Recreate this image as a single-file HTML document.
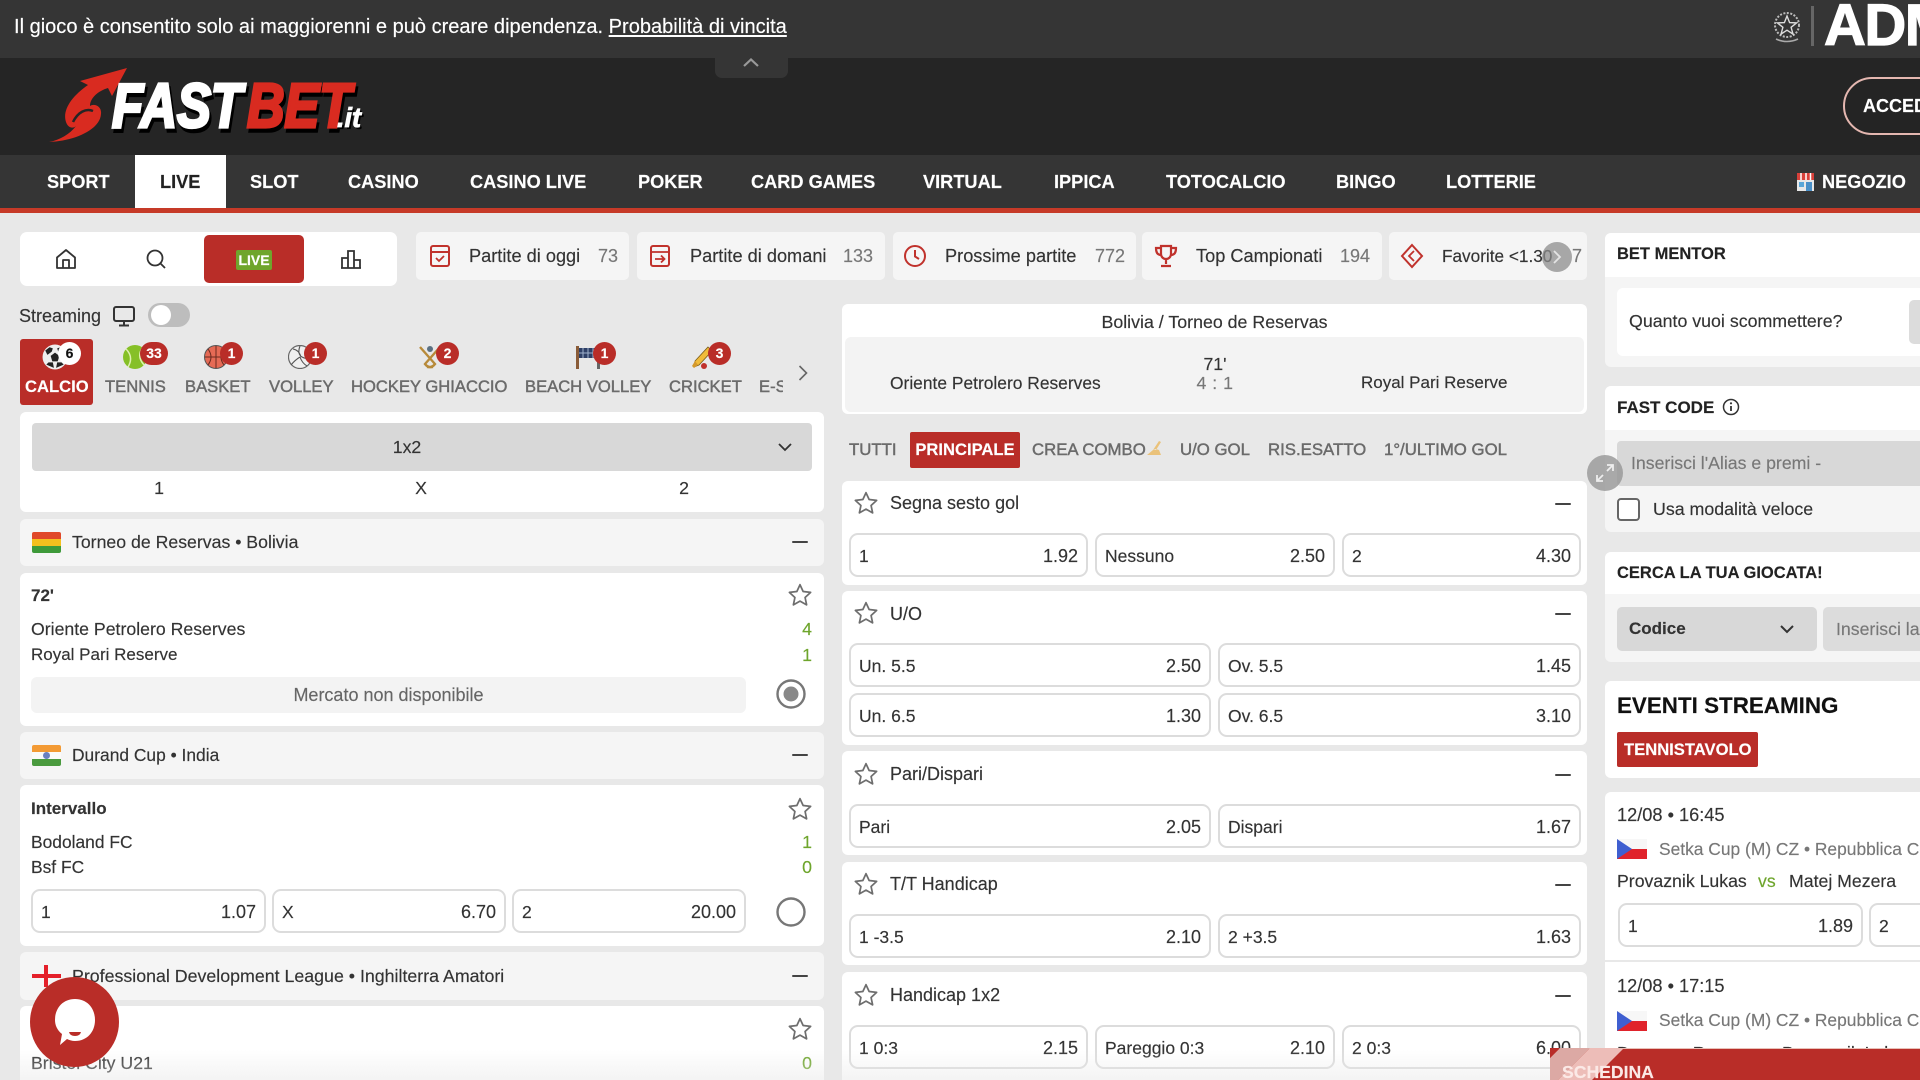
<!DOCTYPE html>
<html lang="it"><head><meta charset="utf-8"><title>Fastbet</title>
<style>
html,body{margin:0;padding:0;background:#e8e8e8}
#r{position:relative;width:1920px;height:1080px;overflow:hidden;background:#e8e8e8;font-family:"Liberation Sans",sans-serif;color:#333;font-size:17.7px;filter:blur(.35px);-webkit-text-stroke:.15px}
#r div,#r span,#r svg,#r a{position:absolute;box-sizing:border-box}
.t{white-space:nowrap;line-height:20px;height:20px;margin-top:1px}
.n{color:#fff;font-weight:bold;font-size:18.2px;top:171px}
.ch{top:232px;height:48px;background:#f5f5f5;border-radius:5px}
.ct{top:246px;font-size:18.2px}
.cn{top:246px;color:#777;font-size:18px}
.s{top:377px;color:#6b6b6b;font-size:16.6px;-webkit-text-stroke:.45px #6b6b6b}
.bd{background:#b92d28;color:#fff;font-weight:bold;font-size:14px;text-align:center;line-height:23px;height:23px;width:23px;border-radius:12px;top:342px}
.w{background:#fff;border-radius:6px}
.g{background:#f5f5f5;border-radius:6px}
.m{background:#444;height:2px;width:16px;border-radius:1px}
.sc{color:#6ea52c;right:1108px}
.b{display:block;background:#fff;border:2px solid #dcdcdc;border-radius:9px;height:44px}
.b span{top:11px;line-height:20px;white-space:nowrap;font-size:17.5px}
.b .l{left:8px}.b .v{right:8px;font-size:18px}
.tab{top:439px;color:#6b6b6b;font-size:16.8px;-webkit-text-stroke:.45px #6b6b6b}
.mt{font-size:18px}
.bo{font-weight:bold;font-size:17px}
</style></head><body><div id="r">
<svg width="0" height="0" style="left:0;top:0"><defs>
<symbol id="star" viewBox="0 0 24 24"><path d="M12 2.500l2.900 6.300 6.900.8-5.100 4.700 1.400 6.800-6.100-3.400-6.100 3.400 1.400-6.800-5.100-4.700 6.900-.8z" fill="none" stroke="#6e6e6e" stroke-width="1.600" stroke-linejoin="round"/></symbol>
<symbol id="cz" viewBox="0 0 30 20"><rect width="30" height="10" y="0" fill="#f7f7f7"/><rect width="30" height="10" y="10" fill="#e0232b"/><path d="M0 0L15 10 0 20z" fill="#3f5fd0"/></symbol>
</defs></svg>

<!-- top bar -->
<div style="left:0;top:0;width:1920px;height:58px;background:#353535"></div>
<div class="t" style="left:14px;top:16px;color:#fff;font-size:20.05px">Il gioco è consentito solo ai maggiorenni e può creare dipendenza. <span style="position:static;text-decoration:underline">Probabilità di vincita</span></div>
<svg style="left:1769px;top:8px" width="36" height="36" viewBox="0 0 36 36"><circle cx="18" cy="17" r="12" fill="none" stroke="#bbb" stroke-width="2" stroke-dasharray="2 1.500"/><path d="M18 8l2.600 6.600 7 .3-5.500 4.400 1.900 6.800-6-3.900-6 3.900 1.900-6.800-5.500-4.400 7-.3z" fill="none" stroke="#ddd" stroke-width="1.400"/><path d="M7 31q11 5 22 0" fill="none" stroke="#aaa" stroke-width="1.600"/></svg>
<div style="left:1811px;top:6px;width:3px;height:40px;background:#666"></div>
<div class="t" style="left:1824px;top:-2px;height:56px;line-height:56px;margin:0;color:#fff;font-weight:bold;font-size:58px;letter-spacing:-1.500px;-webkit-text-stroke:1.200px #fff">ADM</div>

<!-- logo bar -->
<div style="left:0;top:58px;width:1920px;height:97px;background:#252525"></div>
<div style="left:715px;top:58px;width:73px;height:20px;background:#353535;border-radius:0 0 7px 7px"></div>
<svg style="left:741px;top:55px" width="20" height="14" viewBox="0 0 20 14"><path d="M3 11l7-6.500 7 6.500" fill="none" stroke="#999" stroke-width="2.200"/></svg>
<svg style="left:40px;top:62px" width="340" height="90" viewBox="40 62 340 90">
<path d="M127 68L80 81 88 85C72 96 62 110 66 122 68 128 73 129 76 126 70 134 60 140 49 142 74 141 100 130 101 114 102 106 94 103 90 106 90 98 98 91 108 88L112 96z" fill="#d92b20"/>
<path d="M73 122C78 112 86 108 93 111" fill="none" stroke="#252525" stroke-width="2.500"/>
<g font-family="Liberation Sans,sans-serif" font-weight="bold" font-style="italic" font-size="62">
<text x="114" y="131" fill="#000" stroke="#000" stroke-width="3.500" textLength="130" lengthAdjust="spacingAndGlyphs">FAST</text>
<text x="112" y="127" fill="#fff" stroke="#fff" stroke-width="3.200" textLength="130" lengthAdjust="spacingAndGlyphs">FAST</text>
<text x="249" y="131" fill="#000" stroke="#000" stroke-width="3.500" textLength="104" lengthAdjust="spacingAndGlyphs">BET</text>
<text x="247" y="127" fill="#d92b20" stroke="#d92b20" stroke-width="3.200" textLength="104" lengthAdjust="spacingAndGlyphs">BET</text>
<text x="339" y="129" fill="#000" font-size="28" textLength="24" lengthAdjust="spacingAndGlyphs">.it</text>
<text x="337" y="127" fill="#fff" font-size="28" stroke="#fff" stroke-width=".8" textLength="24" lengthAdjust="spacingAndGlyphs">.it</text>
</g></svg>
<div style="left:1843px;top:77px;width:140px;height:58px;border:2px solid #e4b7b0;border-radius:29px;background:#242424"></div>
<div class="t" style="left:1863px;top:95px;color:#fff;font-weight:bold;font-size:18px">ACCEDI</div>

<!-- nav -->
<div style="left:0;top:155px;width:1920px;height:53px;background:#353535"></div>
<div style="left:0;top:208px;width:1920px;height:5px;background:#c63a28"></div>
<div style="left:135px;top:155px;width:91px;height:53px;background:#fff"></div>
<div class="t n" style="left:47px">SPORT</div>
<div class="t n" style="left:160px;color:#222">LIVE</div>
<div class="t n" style="left:250px">SLOT</div>
<div class="t n" style="left:348px">CASINO</div>
<div class="t n" style="left:470px">CASINO LIVE</div>
<div class="t n" style="left:638px">POKER</div>
<div class="t n" style="left:751px">CARD GAMES</div>
<div class="t n" style="left:923px">VIRTUAL</div>
<div class="t n" style="left:1054px">IPPICA</div>
<div class="t n" style="left:1166px">TOTOCALCIO</div>
<div class="t n" style="left:1336px">BINGO</div>
<div class="t n" style="left:1446px">LOTTERIE</div>
<div class="t n" style="left:1822px">NEGOZIO</div>
<svg style="left:1796px;top:172px" width="19" height="19" viewBox="0 0 19 19"><rect x="1" y="7" width="17" height="12" fill="#e8e8e8"/><rect x="1" y="1" width="17" height="7" fill="#d8403a"/><path d="M5 1v7M10 1v7M14.500 1v7" stroke="#fff" stroke-width="1.500"/><rect x="10" y="10" width="6" height="9" fill="#4a90c8"/><rect x="3" y="10" width="5" height="5" fill="#5aa6d8"/></svg>

<!-- toolbar -->
<div class="w" style="left:20px;top:232px;width:377px;height:54px;border-radius:7px"></div>
<svg style="left:54px;top:247px" width="24" height="24" viewBox="0 0 24 24"><path d="M3 10.500L12 3l9 7.500V21H3zM9 21v-8h6v8" fill="none" stroke="#333" stroke-width="1.800" stroke-linejoin="round"/></svg>
<svg style="left:144px;top:247px" width="24" height="24" viewBox="0 0 24 24"><circle cx="11" cy="11" r="7.500" fill="none" stroke="#333" stroke-width="1.800"/><path d="M16.500 16.500L21 21" stroke="#333" stroke-width="1.800"/></svg>
<div style="left:204px;top:235px;width:100px;height:48px;background:#b92d28;border-radius:5px"></div>
<div style="left:236px;top:250px;width:36px;height:20px;background:#6fa52c;border-radius:2px;color:#fff;font-weight:bold;font-size:14px;line-height:20px;text-align:center">LIVE</div>
<svg style="left:339px;top:247px" width="24" height="24" viewBox="0 0 24 24"><path d="M3 21V11h6v10M9 21V4h6v17M15 21v-8h6v8M2 21h20" fill="none" stroke="#333" stroke-width="1.800"/></svg>

<!-- chips -->
<div class="ch" style="left:416px;width:213px"></div>
<svg class="ic" style="left:429px;top:244px" width="22" height="24" viewBox="0 0 22 24"><rect x="2" y="2" width="18" height="20" rx="2" fill="none" stroke="#c0322c" stroke-width="2"/><path d="M2 8h18" stroke="#c0322c" stroke-width="2"/><path d="M7 14l3 3 5-5" fill="none" stroke="#c0322c" stroke-width="1.800"/></svg>
<div class="t ct" style="left:469px;top:245px">Partite di oggi</div><div class="t cn" style="left:598px;top:245px">73</div>
<div class="ch" style="left:637px;width:248px"></div>
<svg style="left:649px;top:244px" width="22" height="24" viewBox="0 0 22 24"><rect x="2" y="2" width="18" height="20" rx="2" fill="none" stroke="#c0322c" stroke-width="2"/><path d="M2 8h18M6 15h9M12 11.500l3.500 3.500-3.500 3.500" fill="none" stroke="#c0322c" stroke-width="1.800"/></svg>
<div class="t ct" style="left:690px;top:245px">Partite di domani</div><div class="t cn" style="left:843px;top:245px">133</div>
<div class="ch" style="left:893px;width:243px"></div>
<svg style="left:903px;top:244px" width="24" height="24" viewBox="0 0 24 24"><circle cx="12" cy="12" r="10" fill="none" stroke="#c0322c" stroke-width="2"/><path d="M12 6v6.500l4 2.500" fill="none" stroke="#c0322c" stroke-width="2"/></svg>
<div class="t ct" style="left:945px;top:245px">Prossime partite</div><div class="t cn" style="left:1095px;top:245px">772</div>
<div class="ch" style="left:1142px;width:240px"></div>
<svg style="left:1154px;top:244px" width="24" height="24" viewBox="0 0 24 24"><path d="M7 2h10v8a5 5 0 0 1-10 0zM7 4H2c0 5 2 7 5 7M17 4h5c0 5-2 7-5 7M12 15v5M7 22h10" fill="none" stroke="#c0322c" stroke-width="2.200"/></svg>
<div class="t ct" style="left:1196px;top:245px">Top Campionati</div><div class="t cn" style="left:1340px;top:245px">194</div>
<div class="ch" style="left:1389px;width:198px"></div>
<svg style="left:1400px;top:243px" width="24" height="26" viewBox="0 0 24 26"><path d="M12 2l10 11-10 11L2 13z" fill="none" stroke="#c0322c" stroke-width="2"/><path d="M14 8l-5 5 5 5" fill="none" stroke="#c0322c" stroke-width="1.800"/></svg>
<div class="t ct" style="left:1442px;top:245px;font-size:17.2px">Favorite &lt;1.30</div><div class="t cn" style="left:1572px;top:245px">7</div>
<div style="left:1542px;top:242px;width:30px;height:30px;border-radius:15px;background:rgba(140,140,140,.75)"></div>
<svg style="left:1551px;top:249px" width="12" height="16" viewBox="0 0 12 16"><path d="M3 2l6 6-6 6" fill="none" stroke="#e4e4e4" stroke-width="1.800"/></svg>

<!-- streaming -->
<div class="t" style="left:19px;top:305px;font-size:18px">Streaming</div>
<svg style="left:112px;top:305px" width="24" height="22" viewBox="0 0 24 22"><rect x="2" y="2" width="20" height="14" rx="2" fill="none" stroke="#333" stroke-width="2"/><path d="M12 16v4M7 20.500h10" stroke="#333" stroke-width="2"/></svg>
<div style="left:148px;top:303px;width:42px;height:24px;border-radius:12px;background:#bdbdbd"></div>
<div style="left:151px;top:305px;width:20px;height:20px;border-radius:10px;background:#fff"></div>

<!-- sport tabs -->
<div style="left:20px;top:339px;width:73px;height:66px;background:#b92d28;border-radius:3px"></div>
<div class="t" style="left:25px;top:376px;color:#fff;font-weight:bold;font-size:16.6px">CALCIO</div>
<div class="t s" style="left:105px;top:376px">TENNIS</div>
<div class="t s" style="left:185px;top:376px">BASKET</div>
<div class="t s" style="left:269px;top:376px">VOLLEY</div>
<div class="t s" style="left:351px;top:376px">HOCKEY GHIACCIO</div>
<div class="t s" style="left:525px;top:376px">BEACH VOLLEY</div>
<div class="t s" style="left:669px;top:376px">CRICKET</div>
<div style="left:759px;top:376px;width:24px;height:22px;overflow:hidden"><div class="t s" style="left:0;top:0">E-SPORT</div></div>
<svg style="left:797px;top:363px" width="12" height="20" viewBox="0 0 12 20"><path d="M2.500 3l7 7-7 7" fill="none" stroke="#666" stroke-width="1.600"/></svg>

<svg style="left:42px;top:344px" width="26" height="26" viewBox="0 0 24 24"><circle cx="12" cy="12" r="11.500" fill="#eee"/><path d="M12 8l4 3-1.500 5h-5L8 11z" fill="#222"/><path d="M3 6l4-3 3 1-1 3-4 3zM21 6l-4-3-3 1 1 3 4 3zM4 19l2-2h4l1 5zM20 19l-2-2h-4l-1 5z" fill="#222"/></svg>
<div class="bd" style="left:58px;background:#fff;color:#111">6</div>
<svg style="left:123px;top:345px" width="24" height="24" viewBox="0 0 24 24"><circle cx="12" cy="12" r="12" fill="#86c027"/><path d="M3 4q8 8 2 18M20 2q-7 9 1 18" fill="none" stroke="#dff0b0" stroke-width="1.500"/></svg>
<div class="bd" style="left:140px;width:28px">33</div>
<svg style="left:204px;top:345px" width="24" height="24" viewBox="0 0 24 24"><circle cx="12" cy="12" r="11.500" fill="#e56a55" stroke="#555" stroke-width="1"/><path d="M1 12h22M12 1v22M4 4q6 8 0 16M20 4q-6 8 0 16" fill="none" stroke="#6a2a20" stroke-width="1"/></svg>
<div class="bd" style="left:220px">1</div>
<svg style="left:288px;top:345px" width="24" height="24" viewBox="0 0 24 24"><circle cx="12" cy="12" r="11.500" fill="#f0f0f0" stroke="#666" stroke-width="1.200"/><path d="M12 1q-3 8 2 11t9 0M12 12q-5 3-9 8M12 12q2 6 7 9M5 4q6 1 8 8" fill="none" stroke="#555" stroke-width="1.100"/></svg>
<div class="bd" style="left:304px">1</div>
<svg style="left:416px;top:344px" width="28" height="26" viewBox="0 0 26 26"><path d="M3 3l15 17q-3 4-8 3M23 3L8 20q3 4 8 3" fill="none" stroke="#b78a3a" stroke-width="2.400"/><circle cx="13" cy="5" r="3" fill="#5a7082"/></svg>
<div class="bd" style="left:436px">2</div>
<svg style="left:574px;top:344px" width="28" height="26" viewBox="0 0 28 26"><rect x="2" y="2" width="3" height="23" fill="#8a5c38"/><rect x="23" y="2" width="3" height="23" fill="#666"/><rect x="5" y="4" width="18" height="10" fill="#2e3f66"/><path d="M9 4v10M14 4v10M19 4v10M5 9h18" stroke="#9fb0cc" stroke-width="1"/></svg>
<div class="bd" style="left:593px">1</div>
<svg style="left:690px;top:346px" width="24" height="24" viewBox="0 0 24 24"><path d="M18 1l4 4L9 19l-5 2 1-6z" fill="#f0bb3a" stroke="#7a5b18" stroke-width=".8"/><path d="M5 15l-3 5 2 2 4-3" fill="#d4982a"/><circle cx="14" cy="20" r="3" fill="#c0322c"/></svg>
<div class="bd" style="left:708px">3</div>

<!-- select card -->
<div class="w" style="left:20px;top:412px;width:804px;height:100px"></div>
<div style="left:32px;top:423px;width:780px;height:48px;background:#d8d8d8;border-radius:4px"></div>
<div class="t" style="left:392px;top:436px;width:30px;text-align:center">1x2</div>
<svg style="left:777px;top:441px" width="16" height="12" viewBox="0 0 16 12"><path d="M2 3l6 6 6-6" fill="none" stroke="#333" stroke-width="1.800"/></svg>
<div class="t" style="left:149px;top:477px;width:20px;text-align:center">1</div>
<div class="t" style="left:411px;top:477px;width:20px;text-align:center">X</div>
<div class="t" style="left:674px;top:477px;width:20px;text-align:center">2</div>

<!-- league 1 -->
<div class="g" style="left:20px;top:519px;width:804px;height:47px"></div>
<div style="left:32px;top:532px;width:29px;height:7px;background:#e0482a;border-radius:2px 2px 0 0"></div>
<div style="left:32px;top:539px;width:29px;height:7px;background:#f4c01e"></div>
<div style="left:32px;top:546px;width:29px;height:7px;background:#3e9a3a;border-radius:0 0 2px 2px"></div>
<div class="t" style="left:72px;top:531px">Torneo de Reservas • Bolivia</div>
<div class="m" style="left:792px;top:541px"></div>

<!-- match 1 -->
<div class="w" style="left:20px;top:573px;width:804px;height:153px"></div>
<div class="t bo" style="left:31px;top:585px">72'</div>
<svg style="left:787px;top:582px" width="26" height="26"><use href="#star"/></svg>
<div class="t" style="left:31px;top:618px">Oriente Petrolero Reserves</div><div class="t sc" style="top:618px">4</div>
<div class="t" style="left:31px;top:644px;font-size:17px">Royal Pari Reserve</div><div class="t sc" style="top:644px">1</div>
<div style="left:31px;top:677px;width:715px;height:36px;background:#f3f3f3;border-radius:6px"></div>
<div class="t" style="left:31px;top:684px;width:715px;text-align:center;color:#666;font-size:18px">Mercato non disponibile</div>
<svg style="left:775px;top:678px" width="32" height="32" viewBox="0 0 32 32"><circle cx="16" cy="16" r="13.500" fill="none" stroke="#777" stroke-width="2.400"/><circle cx="16" cy="16" r="7.500" fill="#888"/></svg>

<!-- league 2 -->
<div class="g" style="left:20px;top:732px;width:804px;height:47px"></div>
<div style="left:32px;top:745px;width:29px;height:7px;background:#f39a34;border-radius:2px 2px 0 0"></div>
<div style="left:32px;top:752px;width:29px;height:7px;background:#fafafa"></div>
<div style="left:43px;top:752px;width:7px;height:7px;border-radius:4px;background:#6a80c0"></div>
<div style="left:32px;top:759px;width:29px;height:7px;background:#4a9a3e;border-radius:0 0 2px 2px"></div>
<div class="t" style="left:72px;top:744px;font-size:17.4px">Durand Cup • India</div>
<div class="m" style="left:792px;top:754px"></div>

<!-- match 2 -->
<div class="w" style="left:20px;top:785px;width:804px;height:161px"></div>
<div class="t bo" style="left:31px;top:798px">Intervallo</div>
<svg style="left:787px;top:796px" width="26" height="26"><use href="#star"/></svg>
<div class="t" style="left:31px;top:831px;font-size:17.4px">Bodoland FC</div><div class="t sc" style="top:831px">1</div>
<div class="t" style="left:31px;top:856px;font-size:17.4px">Bsf FC</div><div class="t sc" style="top:856px">0</div>
<div class="b" style="left:31px;top:889px;width:235px"><span class="l">1</span><span class="v">1.07</span></div>
<div class="b" style="left:272px;top:889px;width:234px"><span class="l">X</span><span class="v">6.70</span></div>
<div class="b" style="left:512px;top:889px;width:234px"><span class="l">2</span><span class="v">20.00</span></div>
<svg style="left:775px;top:896px" width="32" height="32" viewBox="0 0 32 32"><circle cx="16" cy="16" r="13.500" fill="none" stroke="#777" stroke-width="2.400"/></svg>

<!-- league 3 -->
<div class="g" style="left:20px;top:952px;width:804px;height:48px"></div>
<div style="left:32px;top:974px;width:29px;height:4px;background:#e4202a"></div>
<div style="left:44px;top:965px;width:4px;height:22px;background:#e4202a"></div>
<div class="t" style="left:72px;top:965px;font-size:17.8px">Professional Development League • Inghilterra Amatori</div>
<div class="m" style="left:792px;top:975px"></div>

<!-- match 3 -->
<div class="w" style="left:20px;top:1006px;width:804px;height:80px"></div>
<svg style="left:787px;top:1016px" width="26" height="26"><use href="#star"/></svg>
<div class="t" style="left:31px;top:1052px">Bristol City U21</div><div class="t sc" style="top:1052px">0</div>

<!-- middle head -->
<div class="w" style="left:842px;top:304px;width:745px;height:110px"></div>
<div class="t" style="left:842px;top:311px;width:745px;text-align:center;font-size:17.8px">Bolivia / Torneo de Reservas</div>
<div style="left:845px;top:337px;width:739px;height:75px;background:#f3f3f3;border-radius:6px"></div>
<div class="t" style="left:890px;top:372px;font-size:17.4px">Oriente Petrolero Reserves</div>
<div class="t" style="left:1185px;top:353px;width:60px;text-align:center">71'</div>
<div class="t" style="left:1185px;top:372px;width:60px;text-align:center;color:#777;letter-spacing:.5px">4 : 1</div>
<div class="t" style="left:1361px;top:372px;font-size:17px">Royal Pari Reserve</div>

<!-- middle tabs -->
<div class="t tab" style="left:849px">TUTTI</div>
<div style="left:910px;top:432px;width:110px;height:36px;background:#b92d28;border-radius:2px"></div>
<div class="t" style="left:910px;top:439px;width:110px;text-align:center;color:#fff;font-weight:bold;font-size:16.6px">PRINCIPALE</div>
<div class="t tab" style="left:1032px">CREA COMBO</div>
<svg style="left:1145px;top:439px" width="18" height="18" viewBox="0 0 18 18"><path d="M2 16h14l-2-5-3-1-3 1zM8 11l6-9 2 1-5 8" fill="#eac27a"/></svg>
<div class="t tab" style="left:1180px">U/O GOL</div>
<div class="t tab" style="left:1268px">RIS.ESATTO</div>
<div class="t tab" style="left:1384px">1°/ULTIMO GOL</div>

<!-- markets -->
<div class="w" style="left:842px;top:481px;width:745px;height:104px"></div>
<svg style="left:853px;top:490px" width="26" height="26"><use href="#star"/></svg>
<div class="t mt" style="left:890px;top:492px">Segna sesto gol</div>
<div class="m" style="left:1555px;top:503px"></div>
<div class="b" style="left:849px;top:533px;width:239px"><span class="l">1</span><span class="v">1.92</span></div>
<div class="b" style="left:1095px;top:533px;width:240px"><span class="l">Nessuno</span><span class="v">2.50</span></div>
<div class="b" style="left:1342px;top:533px;width:239px"><span class="l">2</span><span class="v">4.30</span></div>

<div class="w" style="left:842px;top:591px;width:745px;height:154px"></div>
<svg style="left:853px;top:600px" width="26" height="26"><use href="#star"/></svg>
<div class="t mt" style="left:890px;top:603px">U/O</div>
<div class="m" style="left:1555px;top:613px"></div>
<div class="b" style="left:849px;top:643px;width:362px"><span class="l">Un. 5.5</span><span class="v">2.50</span></div>
<div class="b" style="left:1218px;top:643px;width:363px"><span class="l">Ov. 5.5</span><span class="v">1.45</span></div>
<div class="b" style="left:849px;top:693px;width:362px"><span class="l">Un. 6.5</span><span class="v">1.30</span></div>
<div class="b" style="left:1218px;top:693px;width:363px"><span class="l">Ov. 6.5</span><span class="v">3.10</span></div>

<div class="w" style="left:842px;top:751px;width:745px;height:104px"></div>
<svg style="left:853px;top:761px" width="26" height="26"><use href="#star"/></svg>
<div class="t mt" style="left:890px;top:763px">Pari/Dispari</div>
<div class="m" style="left:1555px;top:774px"></div>
<div class="b" style="left:849px;top:804px;width:362px"><span class="l">Pari</span><span class="v">2.05</span></div>
<div class="b" style="left:1218px;top:804px;width:363px"><span class="l">Dispari</span><span class="v">1.67</span></div>

<div class="w" style="left:842px;top:862px;width:745px;height:103px"></div>
<svg style="left:853px;top:871px" width="26" height="26"><use href="#star"/></svg>
<div class="t mt" style="left:890px;top:873px">T/T Handicap</div>
<div class="m" style="left:1555px;top:884px"></div>
<div class="b" style="left:849px;top:914px;width:362px"><span class="l">1 -3.5</span><span class="v">2.10</span></div>
<div class="b" style="left:1218px;top:914px;width:363px"><span class="l">2 +3.5</span><span class="v">1.63</span></div>

<div class="w" style="left:842px;top:972px;width:745px;height:120px"></div>
<svg style="left:853px;top:982px" width="26" height="26"><use href="#star"/></svg>
<div class="t mt" style="left:890px;top:984px">Handicap 1x2</div>
<div class="m" style="left:1555px;top:995px"></div>
<div class="b" style="left:849px;top:1025px;width:239px"><span class="l">1 0:3</span><span class="v">2.15</span></div>
<div class="b" style="left:1095px;top:1025px;width:240px"><span class="l">Pareggio 0:3</span><span class="v">2.10</span></div>
<div class="b" style="left:1342px;top:1025px;width:239px"><span class="l">2 0:3</span><span class="v">6.00</span></div>

<!-- right: bet mentor -->
<div class="g" style="left:1605px;top:233px;width:330px;height:134px"></div>
<div class="w" style="left:1605px;top:233px;width:330px;height:44px;border-radius:6px 6px 0 0"></div>
<div class="t" style="left:1617px;top:243px;font-weight:bold;font-size:16.5px;color:#222">BET MENTOR</div>
<div class="w" style="left:1617px;top:288px;width:320px;height:68px"></div>
<div class="t" style="left:1629px;top:310px;font-size:17.8px">Quanto vuoi scommettere?</div>
<div style="left:1909px;top:300px;width:40px;height:44px;background:#dcdcdc;border-radius:5px"></div>

<!-- fast code -->
<div class="g" style="left:1605px;top:386px;width:330px;height:146px"></div>
<div class="w" style="left:1605px;top:386px;width:330px;height:44px;border-radius:6px 6px 0 0"></div>
<div class="t" style="left:1617px;top:397px;font-weight:bold;font-size:17px;color:#222">FAST CODE</div>
<svg style="left:1722px;top:398px" width="18" height="18" viewBox="0 0 18 18"><circle cx="9" cy="9" r="7.500" fill="none" stroke="#333" stroke-width="1.500"/><path d="M9 8v5" stroke="#333" stroke-width="1.800"/><circle cx="9" cy="5.300" r="1.100" fill="#333"/></svg>
<div style="left:1617px;top:441px;width:320px;height:45px;background:#d8d8d8;border-radius:4px"></div>
<div class="t" style="left:1631px;top:452px;color:#777">Inserisci l'Alias e premi -</div>
<div style="left:1617px;top:498px;width:23px;height:23px;border:2px solid #666;border-radius:4px;background:#fff"></div>
<div class="t" style="left:1653px;top:498px;font-size:17.8px">Usa modalità veloce</div>

<!-- cerca -->
<div class="g" style="left:1605px;top:552px;width:330px;height:110px"></div>
<div class="w" style="left:1605px;top:552px;width:330px;height:42px;border-radius:6px 6px 0 0"></div>
<div class="t" style="left:1617px;top:562px;font-weight:bold;font-size:16.5px;color:#222">CERCA LA TUA GIOCATA!</div>
<div style="left:1617px;top:607px;width:200px;height:44px;background:#d8d8d8;border-radius:5px"></div>
<div class="t bo" style="left:1629px;top:618px">Codice</div>
<svg style="left:1779px;top:623px" width="16" height="12" viewBox="0 0 16 12"><path d="M2 3l6 6 6-6" fill="none" stroke="#333" stroke-width="2"/></svg>
<div style="left:1823px;top:607px;width:120px;height:44px;background:#dcdcdc;border-radius:5px"></div>
<div class="t" style="left:1836px;top:618px;color:#777">Inserisci la giocata</div>

<!-- expand -->
<div style="left:1587px;top:455px;width:36px;height:36px;border-radius:18px;background:rgba(150,150,150,.8)"></div>
<svg style="left:1594px;top:462px" width="22" height="22" viewBox="0 0 22 22"><path d="M13 3h6v6M19 3l-6 6M3 13v6h6M3 19l6-6" fill="none" stroke="#eee" stroke-width="1.800"/></svg>

<!-- eventi -->
<div class="w" style="left:1605px;top:681px;width:330px;height:97px"></div>
<div class="t" style="left:1617px;top:695px;font-weight:bold;font-size:22.4px;color:#111">EVENTI STREAMING</div>
<div style="left:1617px;top:732px;width:141px;height:35px;background:#b92d28;border-radius:2px"></div>
<div class="t" style="left:1624px;top:739px;color:#fff;font-weight:bold;font-size:16.6px">TENNISTAVOLO</div>

<div class="w" style="left:1605px;top:792px;width:330px;height:168px;border-radius:6px 6px 0 0"></div>
<div class="t" style="left:1617px;top:804px;font-size:18.2px">12/08 • 16:45</div>
<svg style="left:1617px;top:839px" width="30" height="20"><use href="#cz"/></svg>
<div class="t" style="left:1659px;top:838px;color:#777;font-size:17.4px">Setka Cup (M) CZ • Repubblica Ceca</div>
<div class="t" style="left:1617px;top:870px">Provaznik Lukas</div>
<div class="t" style="left:1758px;top:870px;color:#6ea52c">vs</div>
<div class="t" style="left:1789px;top:870px">Matej Mezera</div>
<div class="b" style="left:1618px;top:903px;width:245px"><span class="l">1</span><span class="v">1.89</span></div>
<div class="b" style="left:1869px;top:903px;width:100px"><span class="l">2</span></div>

<div class="w" style="left:1605px;top:962px;width:330px;height:130px;border-radius:0"></div>
<div class="t" style="left:1617px;top:975px;font-size:18.2px">12/08 • 17:15</div>
<svg style="left:1617px;top:1011px" width="30" height="20"><use href="#cz"/></svg>
<div class="t" style="left:1659px;top:1009px;color:#777;font-size:17.4px">Setka Cup (M) CZ • Repubblica Ceca</div>
<div class="t" style="left:1617px;top:1042px">Donovan Rosman</div>
<div class="t" style="left:1782px;top:1042px">Provaznik Lukas</div>

<!-- bottom fade -->
<div style="left:0;top:1050px;width:1920px;height:30px;background:linear-gradient(rgba(232,232,232,0),rgba(232,232,232,.5))"></div>

<!-- chat -->
<div style="left:30px;top:977px;width:89px;height:90px;border-radius:50%;background:#b92d28"></div>
<svg style="left:50px;top:996px" width="50" height="52" viewBox="0 0 50 52"><path d="M25 3C37 3 45 12 45 24 45 36 37 45 25 45 22 45 19 44 17 43L10 49 12 38C7 34 5 29 5 24 5 12 13 3 25 3z" fill="#fff"/><path d="M19 36h12q-1 4-6 4t-6-4z" fill="#b92d28"/></svg>

<!-- schedina -->
<div style="left:1550px;top:1048px;width:370px;height:32px;background:#b92d28;border-top:1px solid #e8c0b8"></div>
<svg style="left:1550px;top:1048px" width="80" height="32" viewBox="0 0 80 32"><path d="M0 32V10L10 0H40L8 32z" fill="#dca9a4"/><path d="M8 32L40 0H74L42 32z" fill="#edbdb8"/><path d="M0 0H10L0 10z" fill="#b92d28"/></svg>
<div class="t" style="left:1562px;top:1061px;color:#fbe9e6;font-weight:bold;font-size:17.6px">SCHEDINA</div>
</div></body></html>
